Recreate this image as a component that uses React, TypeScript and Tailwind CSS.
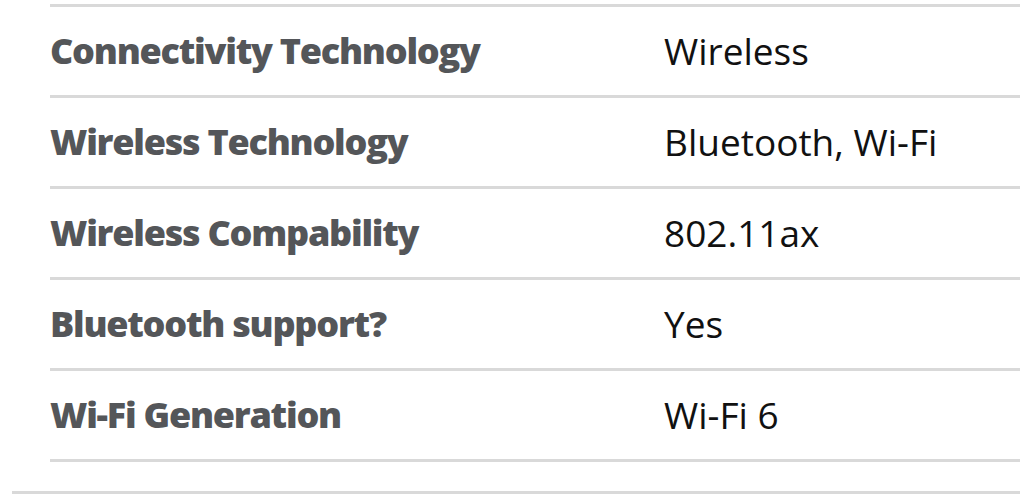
const specs = [
  { label: "Connectivity Technology", value: "Wireless" },
  { label: "Wireless Technology", value: "Bluetooth, Wi-Fi" },
  { label: "Wireless Compability", value: "802.11ax" },
  { label: "Bluetooth support?", value: "Yes" },
  { label: "Wi-Fi Generation", value: "Wi-Fi 6" },
]

export default function App() {
  return (
    <div className="w-[1020px] h-[504px] overflow-hidden bg-white" style={{ fontFamily: '"Open Sans", sans-serif' }}>
      <div className="ml-[50px] mt-[4px] w-[1000px] border-b-[3px] border-[#d9d9d9]">
        {specs.map((row) => (
          <div
            key={row.label}
            className="flex h-[91px] items-center border-t-[3px] border-[#d9d9d9]"
          >
            <div className="w-[614px] text-[36px] font-extrabold tracking-[-1.25px] text-[#545659]">
              {row.label}
            </div>
            <div className="text-[37px] text-[#111111]">{row.value}</div>
          </div>
        ))}
      </div>
      <div className="ml-[12px] mt-[29px] h-[3px] bg-[#d9d9d9]" />
    </div>
  )
}
